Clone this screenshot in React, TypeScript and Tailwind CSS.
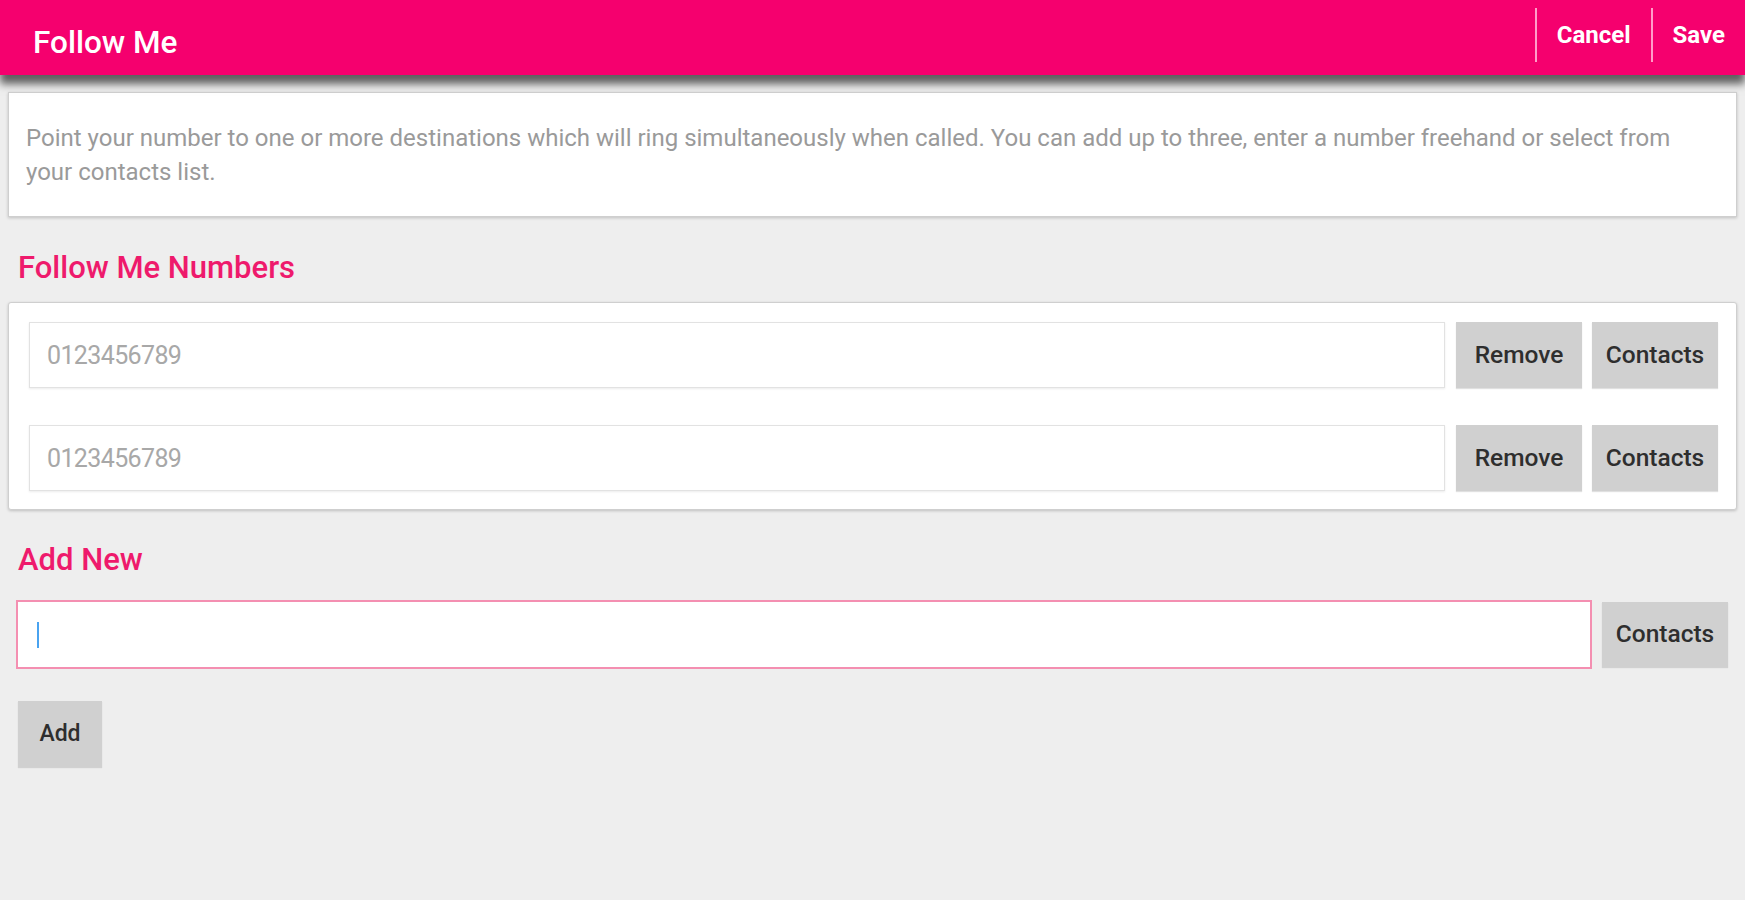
import React from 'react';

const numbers = ['0123456789', '0123456789'];

function GreyButton({ label, className = '' }: { label: string; className?: string }) {
  return (
    <button
      type="button"
      className={`flex items-center justify-center bg-[#d0d0d0] text-[#2e2e2e] font-medium shadow-[0_1px_1px_rgba(0,0,0,0.12)] ${className}`}
    >
      {label}
    </button>
  );
}

function SectionTitle({ children }: { children: React.ReactNode }) {
  return <h2 className="px-[18px] text-[31px] leading-[34px] font-medium text-[#ee1a6c]">{children}</h2>;
}

export default function App() {
  return (
    <div className="min-h-[900px] bg-[#eeeeee] font-['Roboto',sans-serif]">
      {/* App bar */}
      <header className="relative z-10 flex h-[75px] items-stretch justify-between bg-[#f5006e] shadow-[0_9px_8px_rgba(0,0,0,0.6)]">
        <h1 className="flex items-center pl-[33px] pt-[11px] text-[31.5px] font-medium text-white">Follow Me</h1>
        <div className="flex items-center pr-[20px] pb-[6px]">
          <div className="h-[54px] w-[2px] bg-[#ff9cc8]" />
          <button type="button" className="px-[20px] text-[24px] font-bold text-white">Cancel</button>
          <div className="h-[54px] w-[2px] bg-[#ff9cc8]" />
          <button type="button" className="pl-[20px] text-[24px] font-bold text-white">Save</button>
        </div>
      </header>

      {/* Intro card */}
      <section className="mx-[8px] mt-[17px] border border-[#cfcfcf] bg-white px-[17px] pt-[28px] pb-[27px] shadow-[0_1px_3px_rgba(0,0,0,0.2)]">
        <p className="text-[24px] leading-[34px] text-[#9a9a9a]">
          Point your number to one or more destinations which will ring simultaneously when called. You can add up to three, enter a number freehand or select from your contacts list.
        </p>
      </section>

      <div className="mt-[34px] mb-[17px]">
        <SectionTitle>Follow Me Numbers</SectionTitle>
      </div>

      {/* Existing numbers */}
      <section className="mx-[8px] flex flex-col gap-[37px] rounded-[3px] border border-[#cfcfcf] bg-white pl-[20px] pr-[18px] pt-[19px] pb-[18px] shadow-[0_1px_3px_rgba(0,0,0,0.2)]">
        {numbers.map((n, i) => (
          <div key={i} className="flex h-[66px] gap-[10px]">
            <input
              readOnly
              defaultValue={n}
              className="mr-[1px] h-full flex-1 border border-[#e2e2e2] bg-white px-[17px] text-[25px] text-[#a8a8a8] tracking-tight outline-none shadow-[0_1px_2px_rgba(0,0,0,0.08)]"
            />
            <GreyButton label="Remove" className="w-[126px] text-[24.5px]" />
            <GreyButton label="Contacts" className="w-[126px] text-[24.5px]" />
          </div>
        ))}
      </section>

      <div className="mt-[33px] mb-[23px]">
        <SectionTitle>Add New</SectionTitle>
      </div>

      {/* Add new */}
      <section className="flex items-center gap-[10px] pl-[16px] pr-[17px]">
        <div className="flex h-[69px] flex-1 items-center border-2 border-[#f48fb1] bg-white pl-[19px]">
          <span className="h-[26px] w-[2px] bg-[#4aa3f0]" />
        </div>
        <GreyButton label="Contacts" className="h-[65px] w-[126px] text-[24.5px]" />
      </section>

      <div className="mt-[32px] pl-[18px]">
        <GreyButton label="Add" className="h-[66px] w-[84px] text-[23px]" />
      </div>
    </div>
  );
}
